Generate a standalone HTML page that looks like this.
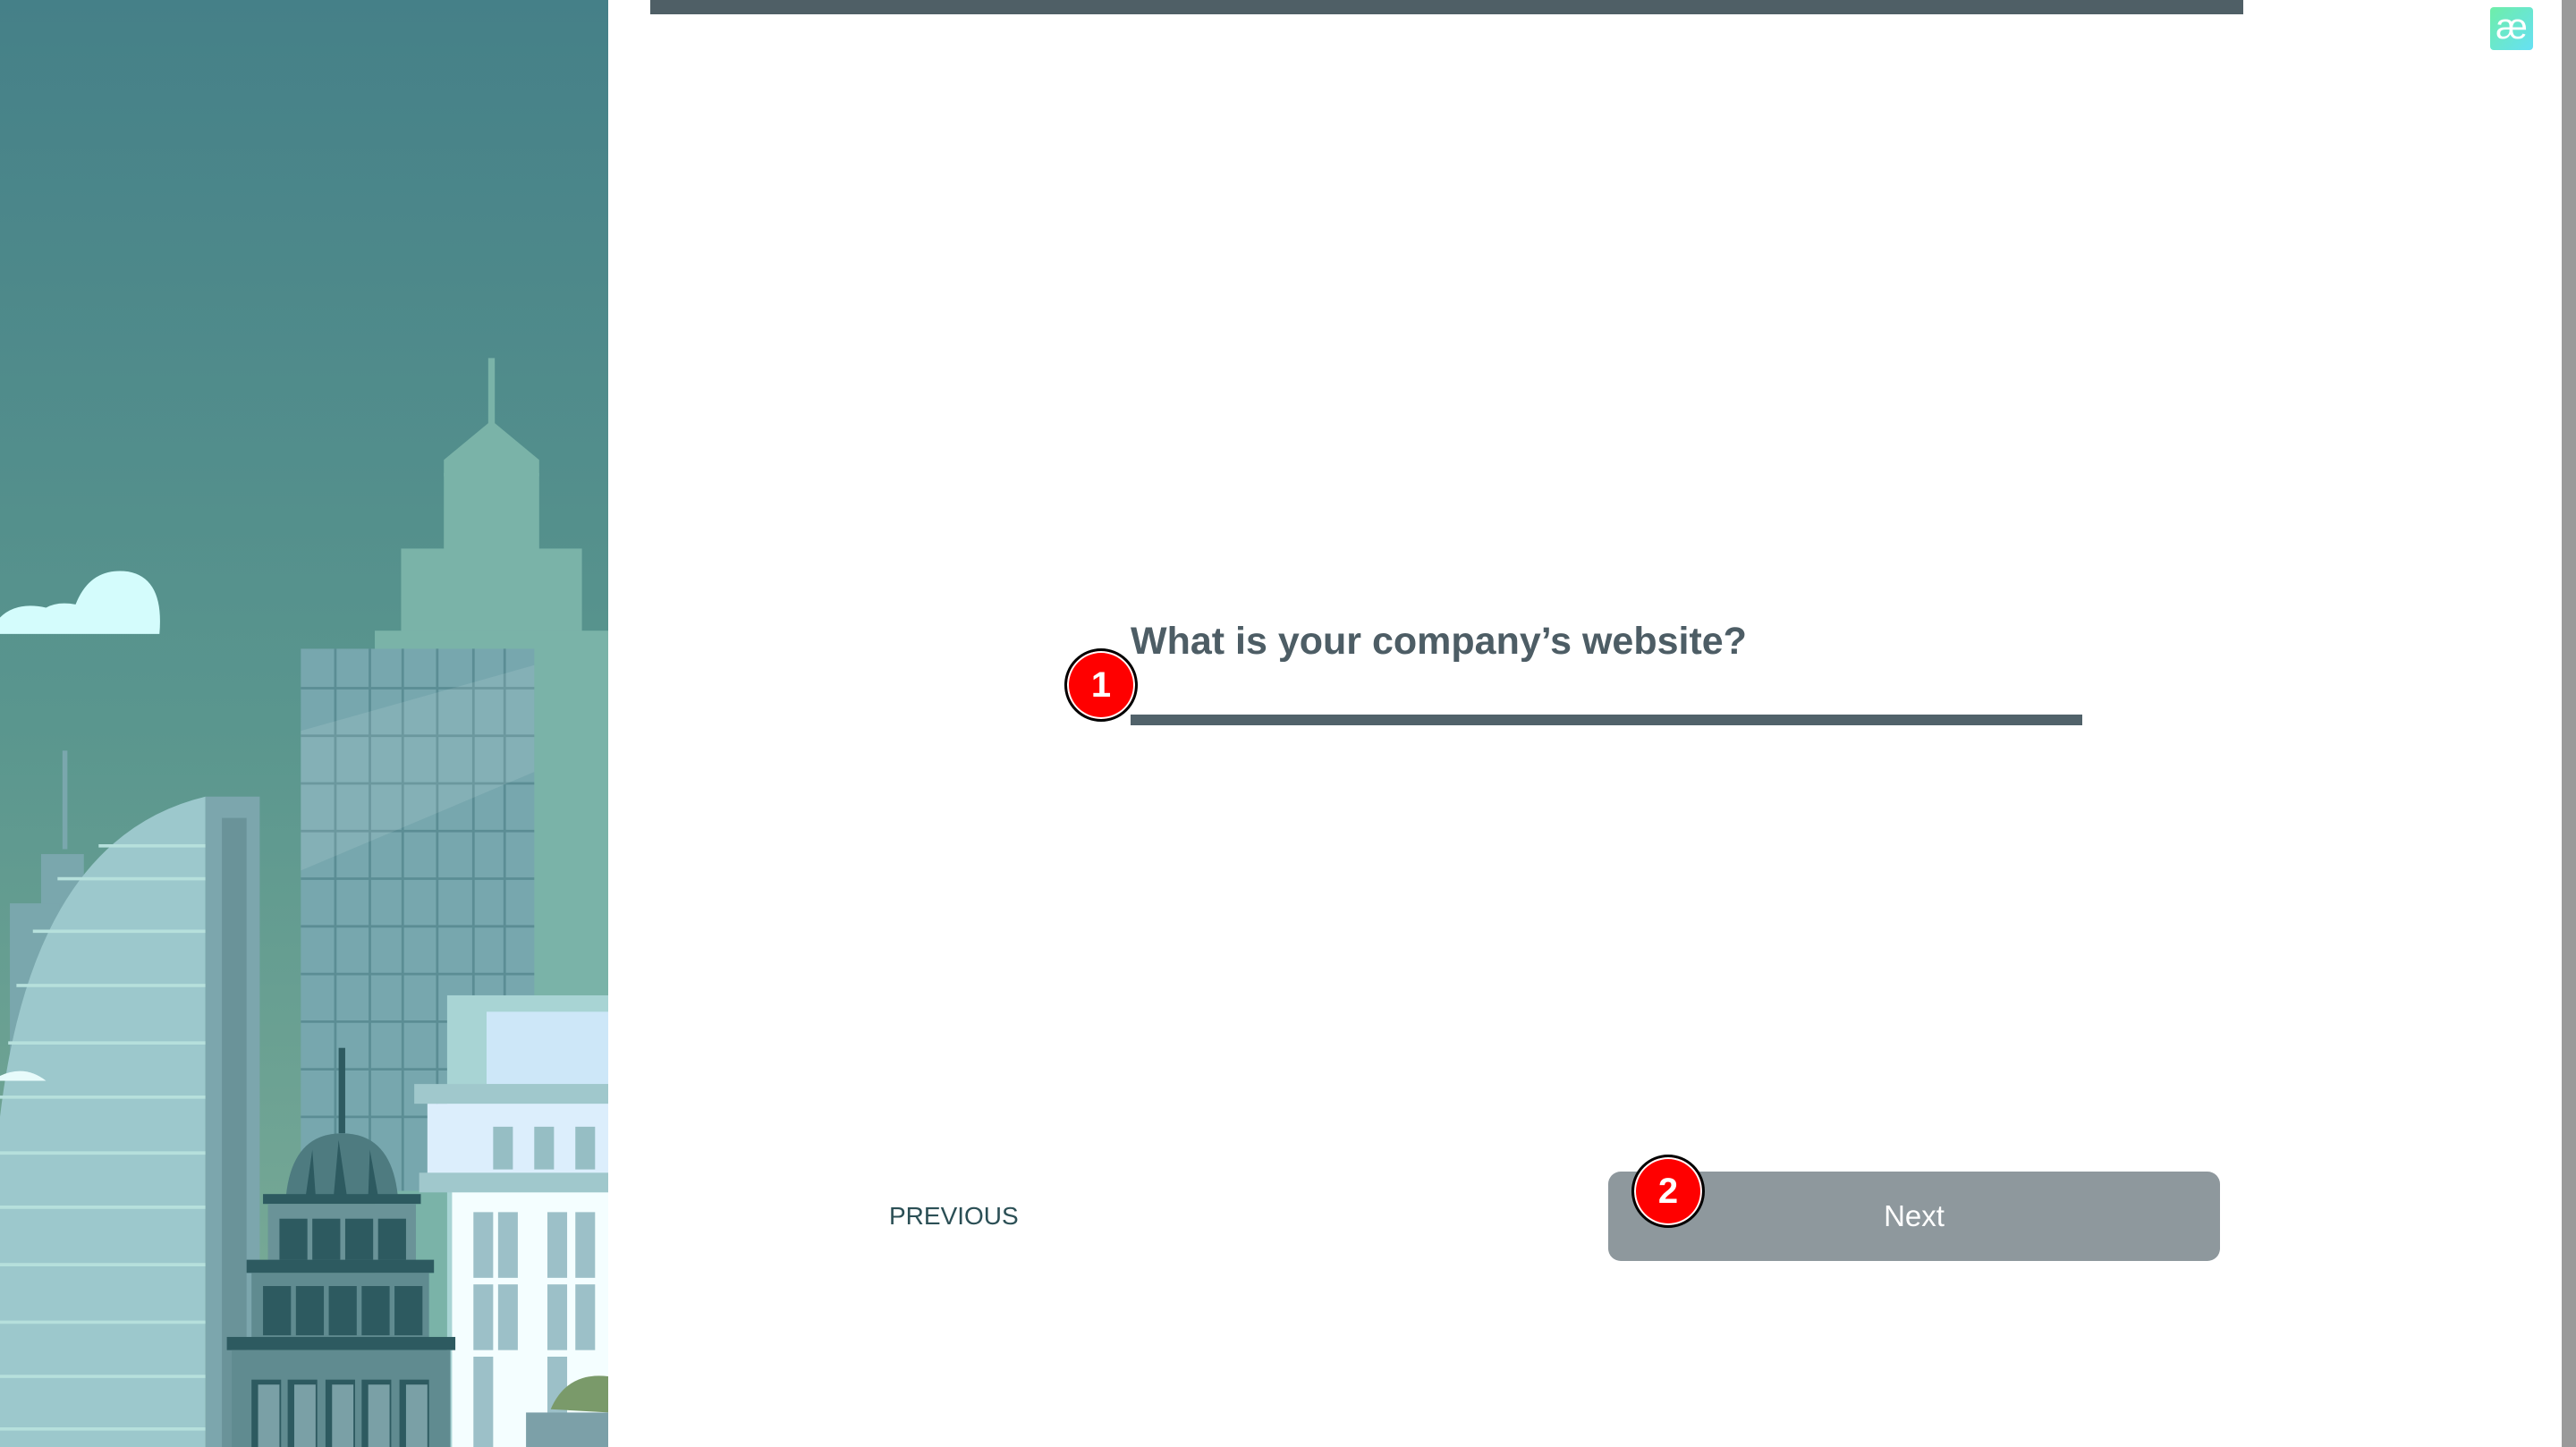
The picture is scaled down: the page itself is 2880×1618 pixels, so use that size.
<!DOCTYPE html>
<html><head><meta charset="utf-8"><style>
html,body{margin:0;padding:0;width:2880px;height:1618px;overflow:hidden;background:#fff;font-family:"Liberation Sans",Arial,sans-serif;}
.abs{position:absolute;}
</style></head><body>
<svg class="abs" style="left:0;top:0" width="680" height="1618" viewBox="0 0 370 881" preserveAspectRatio="none">
<defs><linearGradient id="sky" x1="0" y1="0" x2="0" y2="1"><stop offset="0" stop-color="#458088"/><stop offset="0.5" stop-color="#5a968e"/><stop offset="1" stop-color="#7fae98"/></linearGradient></defs>
<rect width="370" height="881" fill="url(#sky)"/>
<path d="M0 386 L0 376 Q10 366 28 370 Q35 366 46 368 Q55 345 78 348 Q100 352 97 386Z" fill="#d4fcfc"/>
<g fill="#7ab3a8"><rect x="297" y="218" width="4" height="40"/><path d="M270 290 L270 280 L299 256 L328 280 L328 290Z"/><rect x="270" y="288" width="58" height="48"/><rect x="244" y="334" width="110" height="52"/><rect x="228" y="384" width="142" height="497"/></g>
<rect x="183" y="395" width="142" height="330" fill="#77a7ae"/>
<g stroke="#5b8d94" stroke-width="1.5"><path d="M204 395V725M225 395V725M245 395V725M266 395V725M288 395V725M307 395V725"/><path d="M183 419H325M183 448H325M183 477H325M183 506H325M183 535H325M183 564H325M183 593H325M183 622H325M183 651H325M183 680H325"/></g>
<path d="M183 445 L325 405 L325 470 L183 530Z" fill="#fff" opacity="0.1"/>
<rect x="38" y="457" width="3" height="60" fill="#7aa7ad"/><rect x="25" y="520" width="26" height="40" fill="#7aa7ad"/><rect x="6" y="550" width="30" height="331" fill="#7aa7ad"/>
<path d="M0 881 L0 680 Q20 510 125 485 L125 881Z" fill="#9cc8cc"/>
<g stroke="#b6e0dc" stroke-width="2"><path d="M60 515H125M35 535H125M20 567H125M10 600H125M5 635H125M0 668H125M0 702H125M0 735H125M0 770H125M0 805H125M0 838H125M0 870H125"/></g>
<rect x="125" y="485" width="33" height="396" fill="#7ca6ad"/><rect x="135" y="498" width="15" height="383" fill="#6a9399"/>
<path d="M0 655 Q15 648 28 658 L0 658Z" fill="#e8fbfb"/>
<rect x="272" y="606" width="98" height="275" fill="#a8d4d4"/><rect x="296" y="616" width="74" height="44" fill="#cde7f8"/>
<rect x="252" y="660" width="118" height="12" fill="#a0c8cc"/><rect x="260" y="672" width="110" height="50" fill="#dceefc"/>
<g fill="#96bec4"><rect x="300" y="686" width="12" height="26"/><rect x="325" y="686" width="12" height="26"/><rect x="350" y="686" width="12" height="26"/></g>
<rect x="255" y="714" width="115" height="12" fill="#a0c8cc"/><rect x="275" y="726" width="95" height="155" fill="#f4feff"/>
<g fill="#9cc0c8"><rect x="288" y="738" width="12" height="40"/><rect x="303" y="738" width="12" height="40"/><rect x="333" y="738" width="12" height="40"/><rect x="350" y="738" width="12" height="40"/><rect x="288" y="782" width="12" height="40"/><rect x="303" y="782" width="12" height="40"/><rect x="333" y="782" width="12" height="40"/><rect x="350" y="782" width="12" height="40"/><rect x="288" y="826" width="12" height="55"/><rect x="333" y="826" width="12" height="55"/></g>
<path d="M335 858 Q345 835 370 838 L370 860Z" fill="#7a9a6a"/><rect x="320" y="860" width="50" height="21" fill="#7ca0a8"/>
<rect x="206" y="638" width="4" height="52" fill="#2d5a60"/>
<path d="M174 728 Q178 690 208 690 Q238 690 242 728Z" fill="#4e7b80"/>
<g fill="#2d5a60"><path d="M190 700 L186 728 L192 728Z"/><path d="M206 694 L203 728 L211 728Z"/><path d="M225 700 L224 728 L230 728Z"/></g>
<rect x="160" y="727" width="96" height="6" fill="#2d5a60"/><rect x="163" y="733" width="90" height="36" fill="#6a9398"/>
<g fill="#2d5a60"><rect x="170" y="742" width="17" height="25"/><rect x="190" y="742" width="17" height="25"/><rect x="210" y="742" width="17" height="25"/><rect x="230" y="742" width="17" height="25"/></g>
<rect x="150" y="767" width="114" height="8" fill="#2d5a60"/><rect x="153" y="775" width="108" height="40" fill="#608b90"/>
<g fill="#2d5a60"><rect x="160" y="783" width="17" height="30"/><rect x="180" y="783" width="17" height="30"/><rect x="200" y="783" width="17" height="30"/><rect x="220" y="783" width="17" height="30"/><rect x="240" y="783" width="17" height="30"/></g>
<rect x="138" y="814" width="139" height="8" fill="#2d5a60"/><rect x="141" y="822" width="133" height="59" fill="#608b90"/>
<g fill="#2d5a60"><rect x="153" y="840" width="18" height="41"/><rect x="175" y="840" width="18" height="41"/><rect x="198" y="840" width="18" height="41"/><rect x="220" y="840" width="18" height="41"/><rect x="243" y="840" width="18" height="41"/></g>
<g fill="#7aa0a6"><rect x="157" y="843" width="13" height="38"/><rect x="179" y="843" width="13" height="38"/><rect x="202" y="843" width="13" height="38"/><rect x="224" y="843" width="13" height="38"/><rect x="247" y="843" width="13" height="38"/></g>
</svg>
<div class="abs" style="left:727px;top:0;width:1781px;height:16px;background:#4f5f66"></div>
<div class="abs" style="left:2784px;top:8px;width:48px;height:48px;border-radius:4px;background:linear-gradient(135deg,#6eeea8,#66e0f4);color:#fff;font-size:40px;line-height:44px;text-align:center">æ</div>
<div class="abs" style="left:2864px;top:0;width:16px;height:1618px;background:#9a9a9a"></div>
<div class="abs" style="left:1264px;top:693px;font-size:43px;font-weight:bold;color:#4d5d65;white-space:nowrap">What is your company’s website?</div>
<div class="abs" style="left:1264px;top:799px;width:1064px;height:12px;background:#51626a"></div>
<div class="abs" style="left:1190px;top:725px;width:76px;height:76px;border-radius:50%;background:#f00;border:3px solid #000;box-shadow:0 0 0 2px #fff inset;color:#fff;font-weight:bold;font-size:40px;line-height:76px;text-align:center">1</div>
<div class="abs" style="left:994px;top:1344px;font-size:28px;color:#2b4f55">PREVIOUS</div>
<div class="abs" style="left:1798px;top:1310px;width:684px;height:100px;border-radius:14px;background:#8e989d;color:#fff;font-size:33px;line-height:100px;text-align:center">Next</div>
<div class="abs" style="left:1824px;top:1291px;width:76px;height:76px;border-radius:50%;background:#f00;border:3px solid #000;box-shadow:0 0 0 2px #fff inset;color:#fff;font-weight:bold;font-size:40px;line-height:76px;text-align:center">2</div>
</body></html>
